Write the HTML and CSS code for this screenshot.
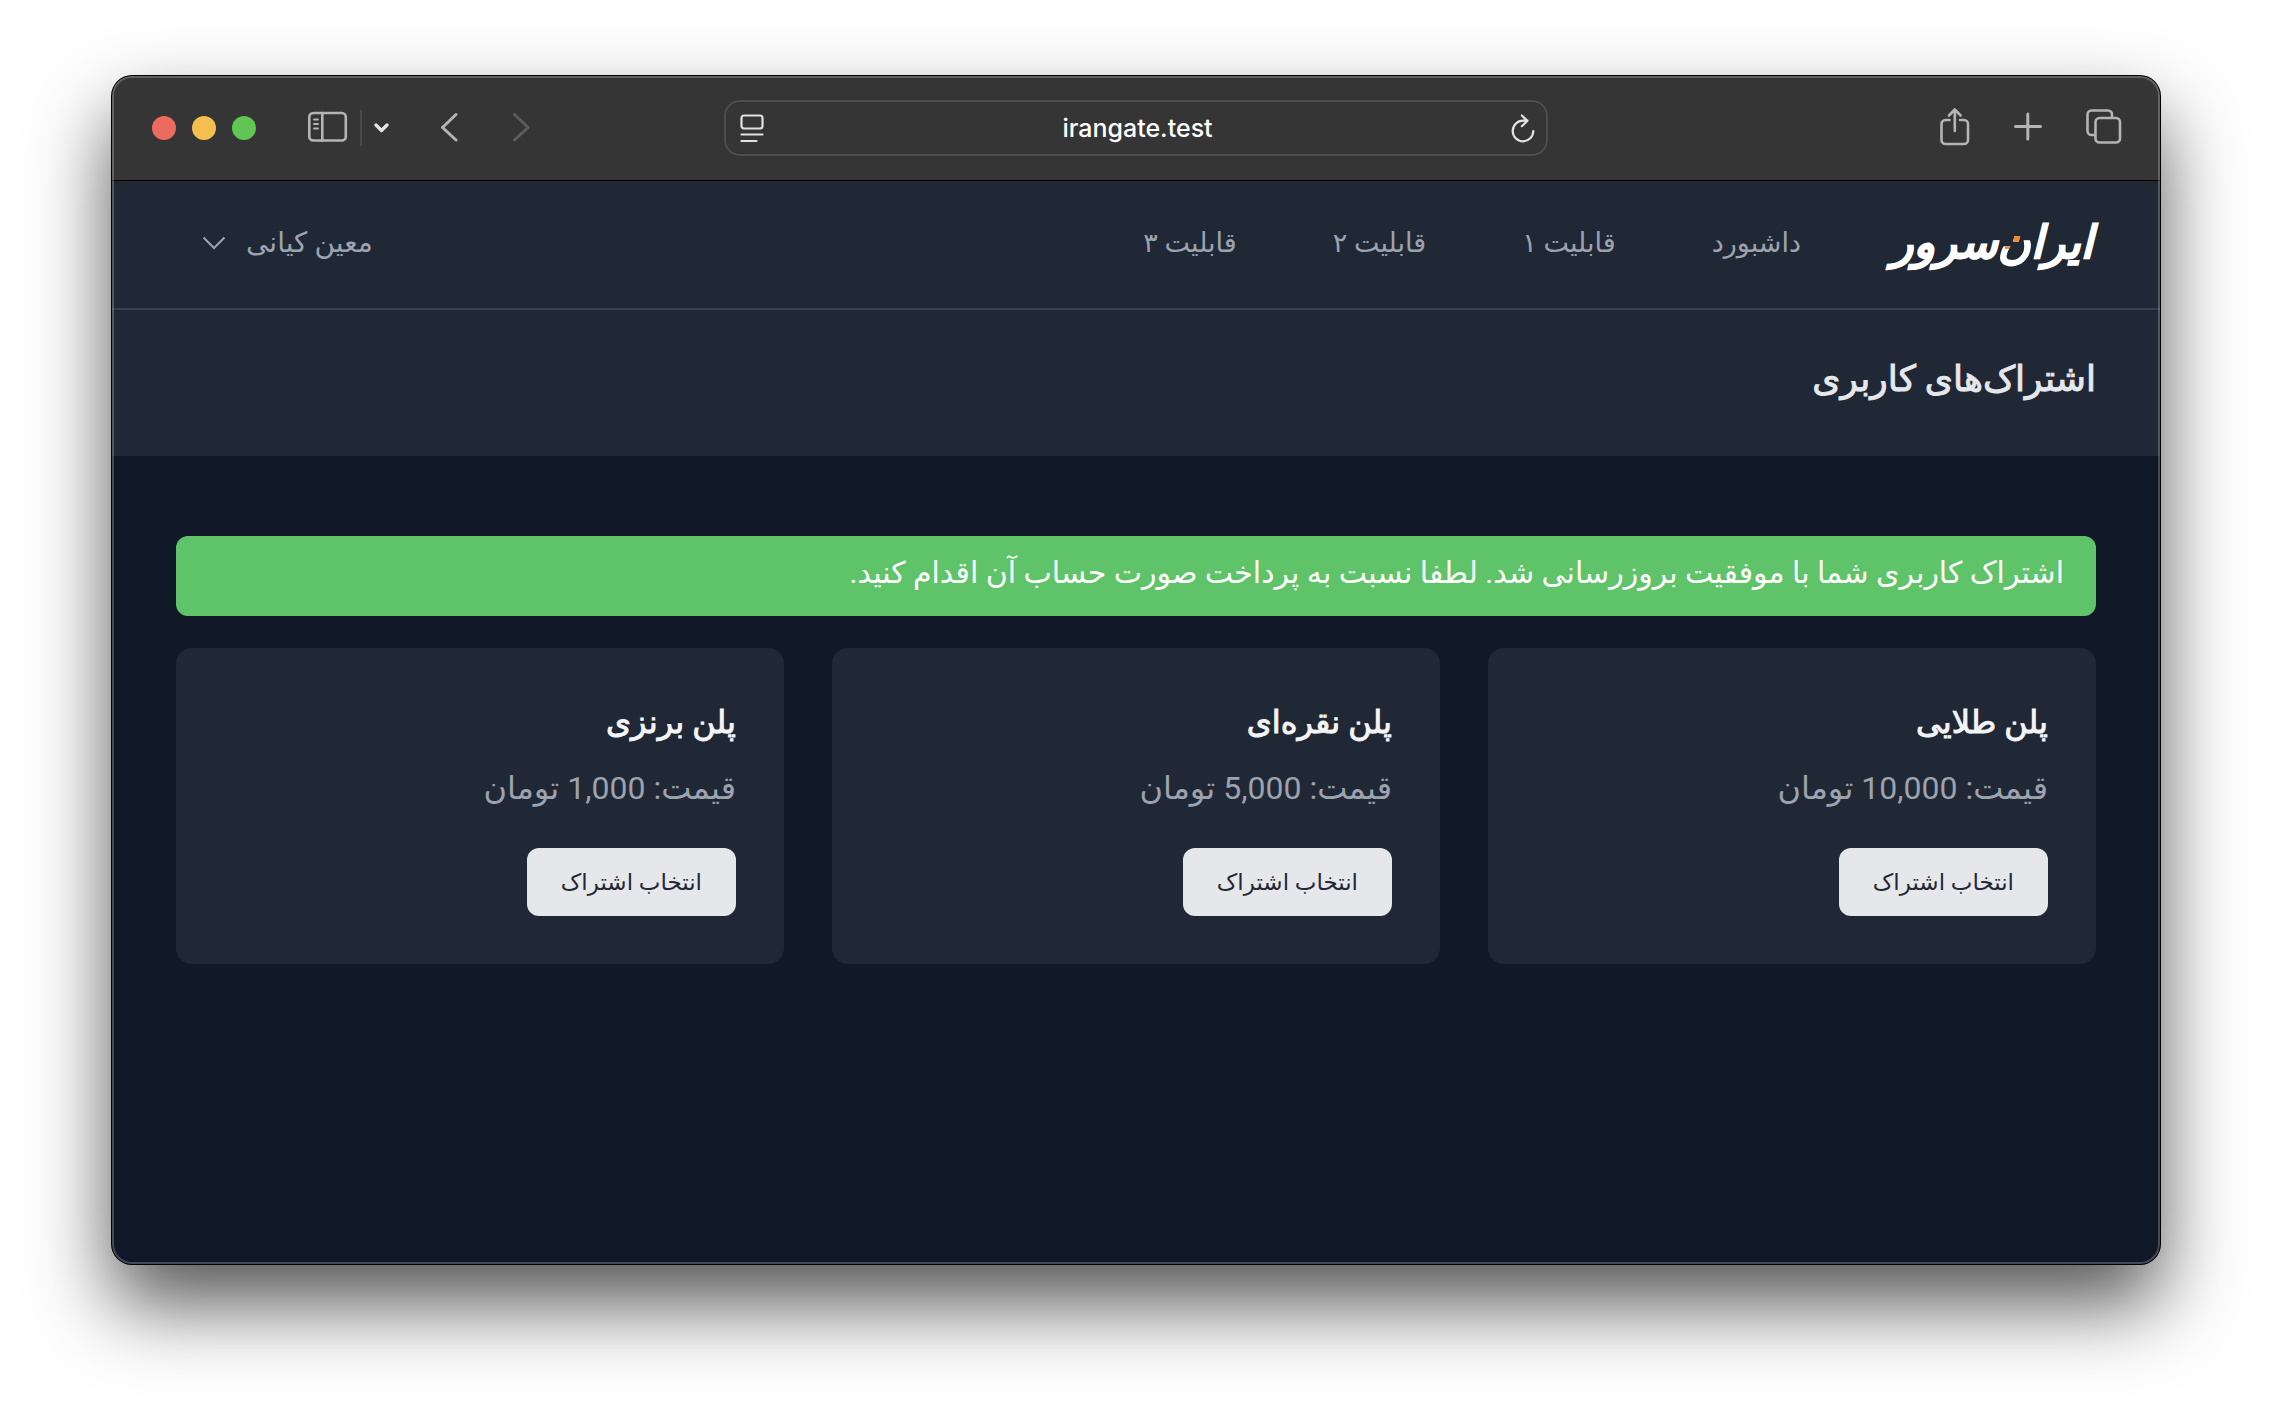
FILE: index.html
```html
<!DOCTYPE html>
<html lang="fa">
<head>
<meta charset="utf-8">
<meta name="viewport" content="width=device-width, initial-scale=1">
<title>اشتراک‌های کاربری</title>
<link rel="stylesheet" href="styles.css">
</head>
<body>
<div class="window">
  <div class="toolbar">
    <div class="tools">
      <div class="lights">
        <button class="light red" aria-label="Close"></button>
        <button class="light yellow" aria-label="Minimize"></button>
        <button class="light green" aria-label="Zoom"></button>
      </div>
      <div class="sidebar-tools">
        <button class="icon" aria-label="Sidebar">
          <svg width="40" height="40" fill="none" stroke="#b4b4b4" stroke-width="2.6" stroke-linecap="round"><rect x="1.300" y="5" width="36.500" height="27.500" rx="4"/><path d="M14.300 5v27.500"/><path stroke-width="1.800" d="M6 11.500h4M6 16h4M6 20.500h4"/></svg>
        </button>
        <span class="divider"></span>
        <button class="icon" aria-label="Tab groups">
          <svg width="15" height="40" fill="none" stroke="#e6e6e6" stroke-width="3.2" stroke-linecap="round" stroke-linejoin="round"><path d="M2 17l5.500 5.500L13 17"/></svg>
        </button>
      </div>
      <div class="history">
        <button class="icon" aria-label="Back">
          <svg width="18" height="40" fill="none" stroke="#b4b4b4" stroke-width="3" stroke-linecap="round" stroke-linejoin="round"><path d="M15 6.500L1.500 19.500 15 32"/></svg>
        </button>
        <button class="icon" aria-label="Forward">
          <svg width="18" height="40" fill="none" stroke="#5c5c5c" stroke-width="3" stroke-linecap="round" stroke-linejoin="round"><path d="M1.500 6.500L15 19.500 1.500 32"/></svg>
        </button>
      </div>
    </div>
    <div class="address">
      <button class="icon" aria-label="Page menu">
        <svg width="24" height="32" fill="none" stroke="#e2e2e2" stroke-width="2.200" stroke-linecap="round"><rect x="1.500" y="3.500" width="21" height="13" rx="2.500"/><path d="M1.500 22.500h21M1.500 29h15"/></svg>
      </button>
      <input class="url" type="text" value="irangate.test" aria-label="Address">
      <button class="icon" aria-label="Reload">
        <svg width="24" height="32" fill="none" stroke="#e2e2e2" stroke-width="2.200" stroke-linecap="round" stroke-linejoin="round"><path d="M22.300 19a10.300 10.300 0 1 1-10.300-10.300h4.500M10.800 3.500l5.700 5.300-5.700 5.400"/></svg>
      </button>
    </div>
    <div class="actions">
      <button class="icon" aria-label="Share">
        <svg width="30" height="40" fill="none" stroke="#b4b4b4" stroke-width="2.600" stroke-linecap="round" stroke-linejoin="round"><path d="M9.500 12H5.500a4 4 0 0 0-4 4v16a4 4 0 0 0 4 4h18.500a4 4 0 0 0 4-4V16a4 4 0 0 0-4-4h-4M14.800 23V2M9 7.500l5.800-6 5.800 6"/></svg>
      </button>
      <button class="icon" aria-label="New tab">
        <svg width="28" height="40" fill="none" stroke="#b4b4b4" stroke-width="3" stroke-linecap="round"><path d="M1.500 18.500h25M13.800 6v25"/></svg>
      </button>
      <button class="icon" aria-label="Tab overview">
        <svg width="36" height="40" fill="none" stroke="#b4b4b4" stroke-width="2.600"><rect x="9.500" y="10" width="24.500" height="24.500" rx="4"/><path d="M9.500 27H5.500a4 4 0 0 1-4-4V6.500a4 4 0 0 1 4-4h16.500a4 4 0 0 1 4 4V10"/></svg>
      </button>
    </div>
  </div>
  <div class="page" dir="rtl">
    <nav class="nav">
      <a class="logo" href="#">ایرا<span class="noon">ن</span>‌سرور</a>
      <div class="links">
        <a href="#">داشبورد</a>
        <a href="#">قابلیت ۱</a>
        <a href="#">قابلیت ۲</a>
        <a href="#">قابلیت ۳</a>
      </div>
      <button class="user">معین کیانی
        <svg width="24" height="16" fill="none" stroke="#9ca3af" stroke-width="2"><path d="M1.500 2.500l10.500 10.500L22.500 2.500"/></svg>
      </button>
    </nav>
    <header class="heading"><h1>اشتراک‌های کاربری</h1></header>
    <main class="content">
      <p class="alert" role="status">اشتراک کاربری شما با موفقیت بروزرسانی شد. لطفا نسبت به پرداخت صورت حساب آن اقدام کنید.</p>
      <div class="plans">
        <section class="card"><h2>پلن طلایی</h2><p>قیمت: 10,000 تومان</p><button class="choose">انتخاب اشتراک</button></section>
        <section class="card"><h2>پلن نقره‌ای</h2><p>قیمت: 5,000 تومان</p><button class="choose">انتخاب اشتراک</button></section>
        <section class="card"><h2>پلن برنزی</h2><p>قیمت: 1,000 تومان</p><button class="choose">انتخاب اشتراک</button></section>
      </div>
    </main>
  </div>
</div>
</body>
</html>
```
FILE: styles.css
```css
* { box-sizing: border-box; }
body {
  margin: 0;
  min-height: 100vh;
  padding: 76px 112px 148px;
  display: flex;
  flex-direction: column;
  background: #fff;
  font-family: Roboto, "DejaVu Sans", sans-serif;
}
h1, h2, p { margin: 0; }
button { border: 0; padding: 0; background: none; font-family: inherit; cursor: pointer; }
a { color: inherit; text-decoration: none; }
svg { display: block; flex: none; }

.window {
  position: relative;
  flex: 1;
  display: flex;
  flex-direction: column;
  border-radius: 20px;
  overflow: hidden;
  background: #111827;
  box-shadow: 0 0 0 1px #000, 0 40px 80px rgba(0, 0, 0, .67);
}
/* light inner rim over the window's content */
.window::after {
  content: "";
  position: absolute;
  inset: 0;
  border: 2px solid rgba(255, 255, 255, .22);
  border-radius: 20px;
  pointer-events: none;
}

.toolbar {
  display: grid;
  grid-template-columns: 1fr minmax(0, 824px) 1fr;
  align-items: center;
  height: 105px;
  border-bottom: 1px solid #000;
  background: #353535;
}
.tools { display: flex; align-items: center; gap: 52px; padding-left: 40px; }
.lights { display: flex; gap: 16px; }
.light { width: 24px; height: 24px; border-radius: 50%; }
.red { background: #ed6a5e; }
.yellow { background: #f5bf4f; }
.green { background: #61c554; }
.sidebar-tools { display: flex; align-items: center; gap: 12px; }
.divider { width: 2px; height: 36px; background: #484848; }
.history { display: flex; gap: 54px; }
.address {
  display: flex;
  align-items: center;
  height: 56px;
  padding: 0 11px 0 14px;
  border: 2px solid #4d4d4d;
  border-radius: 16px;
}
.url {
  flex: 1;
  min-width: 0;
  border: 0;
  background: none;
  color: #fff;
  font: 500 25px/32px Inter, sans-serif;
  text-align: center;
}
.actions { display: flex; justify-content: flex-end; gap: 44px; padding-right: 38px; }

.page { flex: 1; }
.nav {
  display: flex;
  align-items: center;
  min-height: 129px;
  padding: 0 64px 4px 90px;
  border-bottom: 2px solid #374151;
  background: #212835;
  color: #9ca3af;
  font-size: 27px;
  line-height: 40px;
}
.logo {
  width: 206px;
  padding-right: 3px;
  color: #fff;
  font: italic bold 45px/56px "DejaVu Sans", sans-serif;
  -webkit-text-stroke: 1px;
  white-space: nowrap;
}
/* white letter whose dot alone is orange */
.noon {
  margin: 0 -6px;
  padding: 0 6px;
  background:
    linear-gradient(#ec8a2f, #ec8a2f) center top / 40% 62% no-repeat,
    linear-gradient(#fff, #fff);
  -webkit-background-clip: text;
  background-clip: text;
  color: transparent;
}
.links { display: flex; gap: 96px; margin-right: 89px; }
.user {
  display: flex;
  align-items: center;
  gap: 20px;
  margin-right: auto;
  color: #9ca3af;
  font-size: 28px;
  line-height: 40px;
}
.heading { padding: 41px 64px 49px; background: #212835; }
.heading h1, .card h2 {
  font-weight: 400;
  line-height: 56px;
  -webkit-text-stroke: 1px;
}
.heading h1 { color: #e5e7eb; font-size: 36px; }
.content { display: grid; gap: 32px; padding: 80px 64px; }
.alert {
  padding: 13px 32px 19px;
  border-radius: 12px;
  background: #5fc469;
  color: #fff;
  font-size: 30px;
  line-height: 48px;
}
.plans { display: grid; grid-template-columns: repeat(3, 1fr); gap: 48px; }
.card {
  padding: 46px 48px 48px;
  border-radius: 16px;
  background: #212835;
}
.card h2 { color: #f3f4f6; font-size: 32px; }
.card p { margin: 10px 0 32px; color: #9ca3af; font-size: 32px; line-height: 56px; }
.choose {
  display: block;
  height: 68px;
  padding: 0 34px;
  border-radius: 12px;
  background: #e5e7eb;
  color: #1f2937;
  font-size: 23px;
  font-weight: 500;
}
```
